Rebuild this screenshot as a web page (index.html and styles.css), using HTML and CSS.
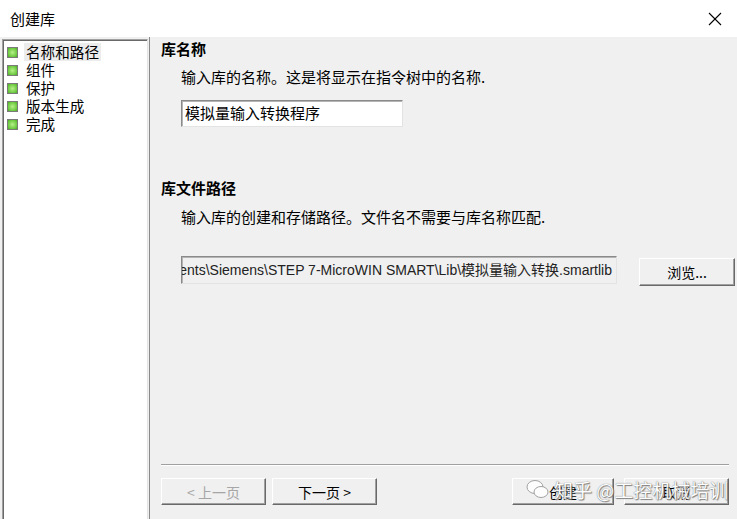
FILE: index.html
```html
<!DOCTYPE html>
<html lang="zh-CN">
<head>
  <meta charset="UTF-8" />
  <title>创建库</title>
  <link rel="stylesheet" href="styles.css">
</head>
<body>

  <!-- Otsikkopalkki -->
  <div class="titlebar">
    <span class="title">创建库</span>
    <svg class="close" width="14" height="14" viewBox="0 0 14 14">
      <line x1="1" y1="1" x2="13" y2="13" stroke="#000" stroke-width="1.1" />
      <line x1="13" y1="1" x2="1" y2="13" stroke="#000" stroke-width="1.1" />
    </svg>
  </div>

  <div class="dialog">
    <ul class="tree">
      <li class="selected"><i class="box"></i><span>名称和路径</span></li>
      <li><i class="box"></i><span>组件</span></li>
      <li><i class="box"></i><span>保护</span></li>
      <li><i class="box"></i><span>版本生成</span></li>
      <li><i class="box"></i><span>完成</span></li>
    </ul>

    <div class="main">
      <h3 class="heading">库名称</h3>
      <p class="desc">输入库的名称。这是将显示在指令树中的名称.</p>
      <div class="field name-field">模拟量输入转换程序</div>

      <h3 class="heading second">库文件路径</h3>
      <p class="desc">输入库的创建和存储路径。文件名不需要与库名称匹配.</p>
      <div class="path-row">
        <div class="field path-field"><span>C:\Users\Public\Documents\Siemens\STEP 7-MicroWIN SMART\Lib\模拟量输入转换.smartlib</span></div>
        <button class="btn browse">浏览...</button>
      </div>

      <div class="footer">
        <div class="sep"></div>
        <div class="buttons">
          <button class="btn nav" disabled>&lt; 上一页</button>
          <button class="btn nav">下一页 &gt;</button>
          <span class="spacer"></span>
          <button class="btn nav create">创建</button>
          <button class="btn nav cancel">取消</button>
        </div>
        <div class="watermark">
          <svg width="24" height="22" viewBox="0 0 24 22">
            <ellipse cx="9" cy="8" rx="8" ry="6.5" fill="#fff" stroke="#9a9a9a" stroke-width="1" />
            <ellipse cx="15" cy="13" rx="7" ry="5.5" fill="#fff" stroke="#9a9a9a" stroke-width="1" />
          </svg>
          <span>知乎 @工控机械培训</span>
        </div>
      </div>
    </div>
  </div>

</body>
</html>
```

FILE: styles.css
```css
body {
  margin: 0;
  width: 737px;
  height: 519px;
  overflow: hidden;
  background: #f0f0f0;
  font-family: "Noto Sans CJK SC", "Liberation Sans", sans-serif;
  font-size: 15px;
  color: #000;
}
.titlebar {
  height: 37px;
  background: #fff;
  display: flex;
  align-items: center;
  justify-content: space-between;
  padding: 0 15px 0 10px;
}
.dialog {
  display: flex;
  height: 482px;
}
.tree {
  flex-shrink: 0;
  list-style: none;
  margin: 2px 0 0 2px;
  padding: 3px 0 0 3px;
  width: 141px;
  background: #fff;
  border-top: 1px solid #a0a0a0;
  border-left: 1px solid #a0a0a0;
  border-right: 1px solid #e3e3e3;
  box-shadow: inset 1px 1px 0 #696969;
  font-size: 14.6px;
}
.tree li {
  display: flex;
  align-items: center;
  height: 18px;
  line-height: 18px;
}
.tree li span {
  padding: 0 2px;
  margin-left: 6px;
}
.tree li.selected span {
  background: #ececec;
}
.box {
  display: block;
  width: 9px;
  height: 9px;
  margin-left: 1px;
  border: 1px solid #7a7a7a;
  background: radial-gradient(circle at 50% 50%, #b6f08a 0%, #6cc93f 70%, #4ea82a 100%);
}
.main {
  flex: 1;
  margin-left: 1px;
  border-left: 1px solid #8a8a8a;
  padding-left: 11px;
  display: flex;
  flex-direction: column;
  position: relative;
}
.heading {
  margin: 2px 0 0;
  font-size: 15px;
  font-weight: bold;
  line-height: 20px;
}
.heading.second {
  margin-top: 51px;
}
.desc {
  margin: 8px 0 0 20px;
  line-height: 20px;
}
.heading.second + .desc {
  margin-top: 9px;
}
.field {
  box-sizing: border-box;
  border: 1px solid;
  border-color: #8a8a8a #e3e3e3 #e3e3e3 #8a8a8a;
  box-shadow: inset 1px 1px 0 #b4b4b4;
  line-height: 24px;
  padding-left: 3px;
  white-space: nowrap;
}
.name-field {
  margin: 13px 0 0 20px;
  width: 222px;
  height: 27px;
  background: #fff;
}
.path-row {
  display: flex;
  align-items: flex-start;
  margin: 29px 0 0 20px;
}
.path-field {
  flex-shrink: 0;
  width: 436px;
  height: 28px;
  line-height: 26px;
  display: flex;
  justify-content: flex-end;
  overflow: hidden;
  padding-right: 4px;
  color: #222;
  font-family: "Liberation Sans", "Noto Sans CJK SC", sans-serif;
  font-size: 14px;
}
.btn {
  box-sizing: border-box;
  flex-shrink: 0;
  background: #f0f0f0;
  border: 1px solid;
  border-color: #fff #696969 #696969 #fff;
  box-shadow: inset -1px -1px 0 #a0a0a0;
  font-family: "Noto Sans CJK SC", "Liberation Sans", sans-serif;
  font-size: 14px;
  color: #000;
  padding: 0;
}
.btn:disabled {
  color: #a6a6a6;
}
.browse {
  width: 96px;
  height: 28px;
  margin: 2px 0 0 22px;
}
.footer {
  margin-top: auto;
  padding: 0 10px 14px 0;
  position: relative;
}
.sep {
  border-top: 1px solid #a0a0a0;
  border-bottom: 1px solid #fff;
  margin-bottom: 12px;
}
.buttons {
  display: flex;
  gap: 6px;
}
.nav {
  width: 105px;
  height: 27px;
}
.spacer {
  width: 123px;
}
.nav.create {
  width: 102px;
}
.nav.cancel {
  margin-left: 4px;
}
.watermark {
  position: absolute;
  left: 365px;
  top: 12px;
  display: flex;
  align-items: center;
  gap: 4px;
  font-size: 19px;
  color: #fff;
  text-shadow: 0 0 1px #555, 1px 1px 1px #777;
  opacity: 0.9;
}
```
